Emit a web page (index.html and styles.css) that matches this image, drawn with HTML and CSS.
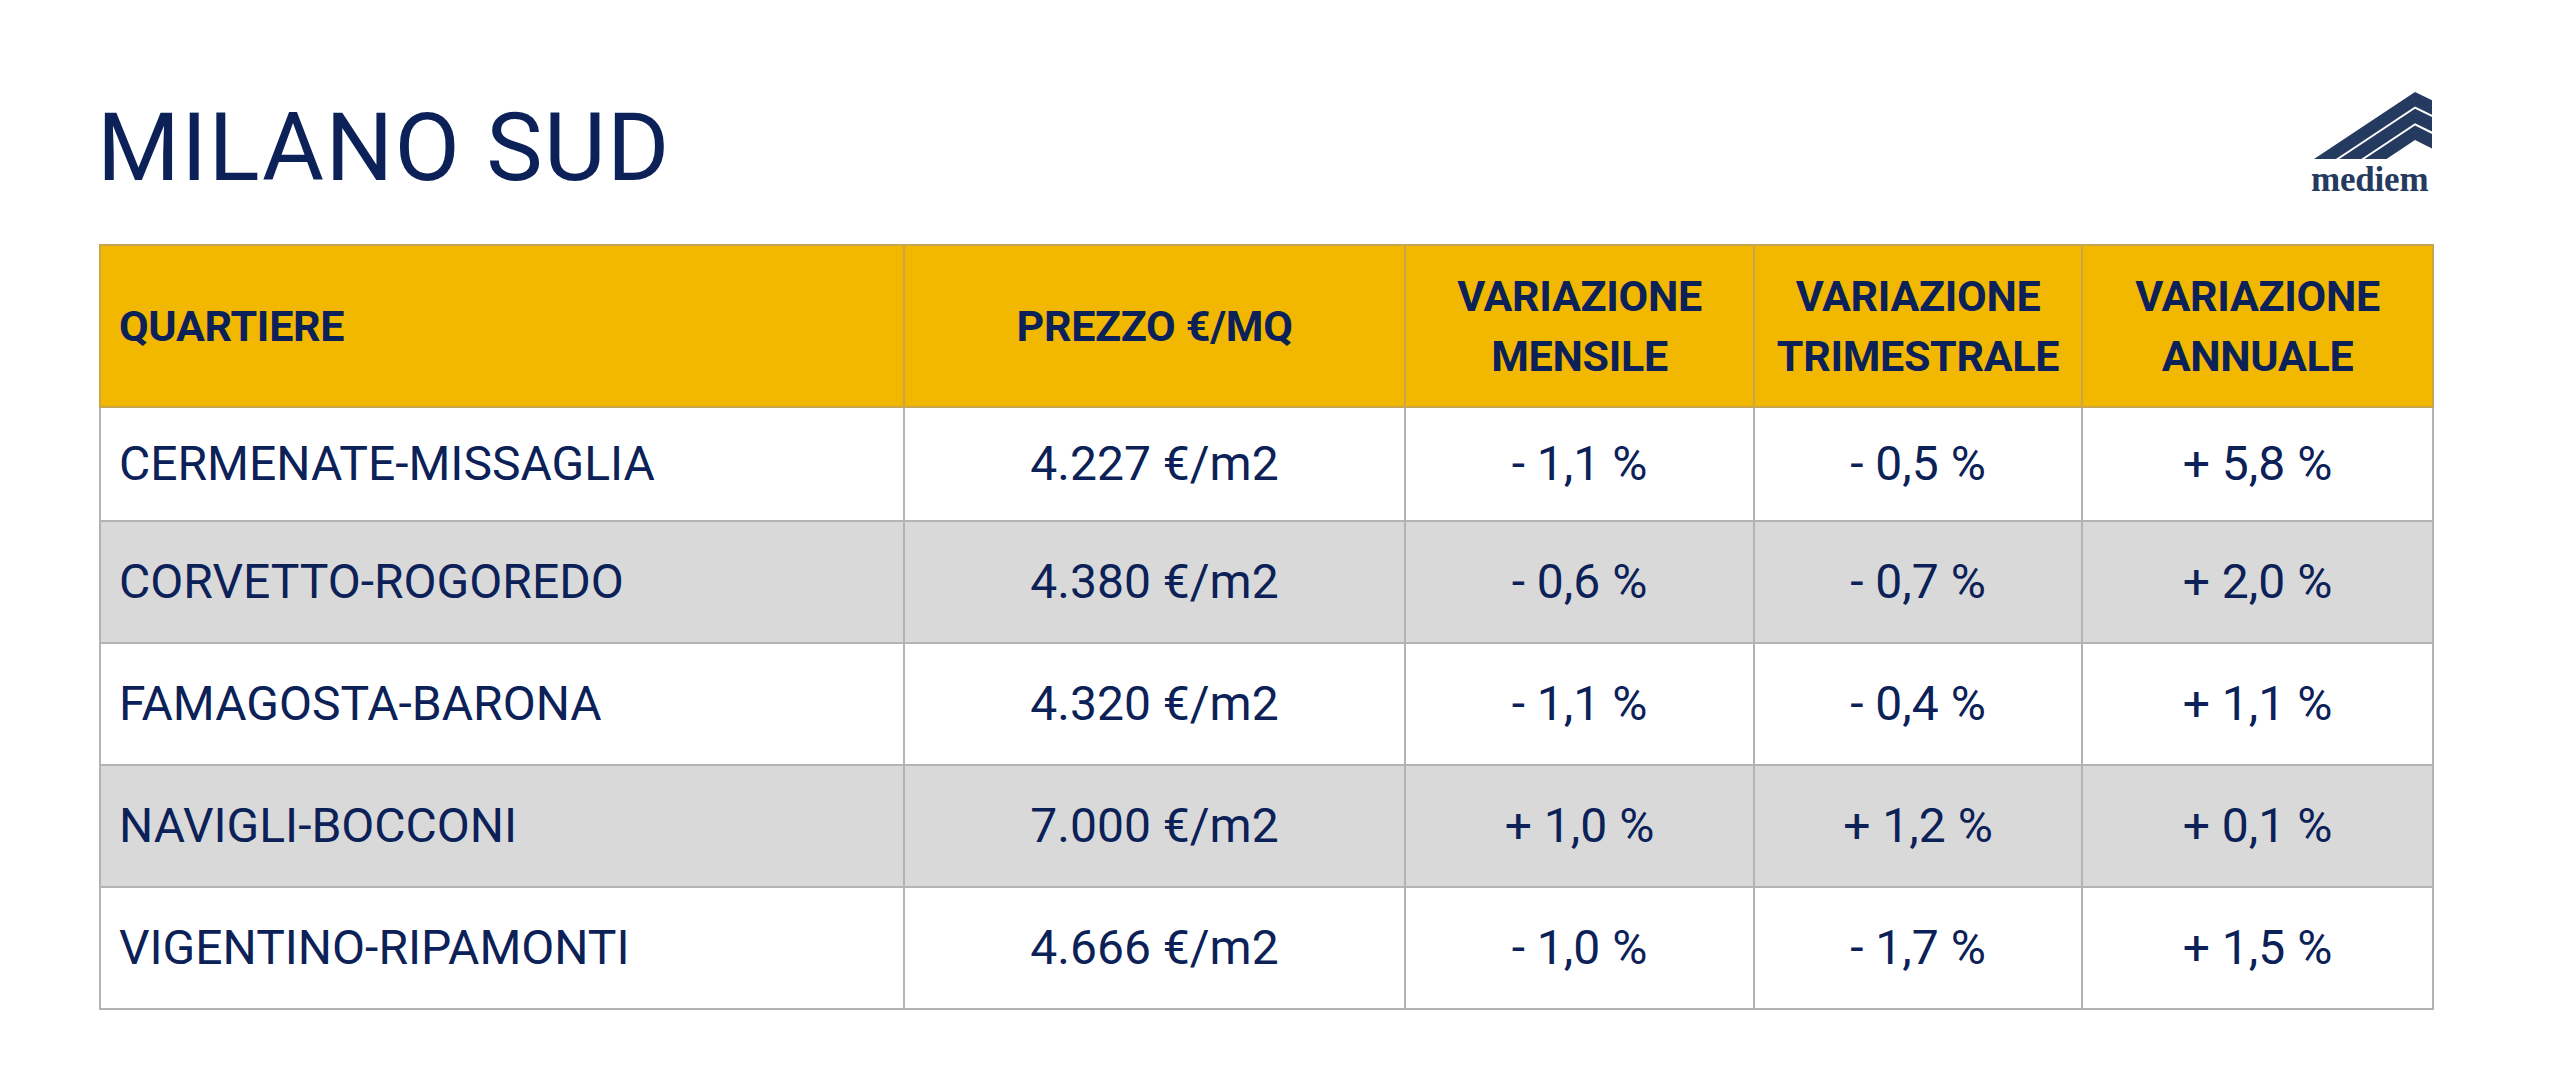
FILE: index.html
```html
<!DOCTYPE html>
<html lang="it">
<head>
<meta charset="utf-8">
<title>Milano Sud</title>
<link rel="stylesheet" href="styles.css">
</head>
<body>
<div class="page">
  <header class="top">
    <h1 class="title">MILANO SUD</h1>
    <div class="logo">
      <svg class="logo-mark" width="118" height="67" viewBox="0 0 118 67" aria-hidden="true">
        <polygon points="0,67 101,0 118,8.3 118,22.8 101,14.5 21.9,67"/>
        <polygon points="25.3,67 101,16.8 118,25.1 118,39.6 101,31.3 47.2,67"/>
        <polygon points="50.6,67 101,33.6 118,41.9 118,56.4 101,48.1 72.5,67"/>
      </svg>
      <div class="logo-text">mediem</div>
    </div>
  </header>

  <table class="prices">
    <colgroup>
      <col class="c1"><col class="c2"><col class="c3"><col class="c4"><col class="c5">
    </colgroup>
    <thead>
      <tr>
        <th class="left">QUARTIERE</th>
        <th>PREZZO €/MQ</th>
        <th>VARIAZIONE<br>MENSILE</th>
        <th>VARIAZIONE<br>TRIMESTRALE</th>
        <th>VARIAZIONE<br>ANNUALE</th>
      </tr>
    </thead>
    <tbody>
      <tr class="first">
        <td class="left">CERMENATE-MISSAGLIA</td>
        <td>4.227 €/m2</td>
        <td>- 1,1 %</td>
        <td>- 0,5 %</td>
        <td>+ 5,8 %</td>
      </tr>
      <tr class="alt">
        <td class="left">CORVETTO-ROGOREDO</td>
        <td>4.380 €/m2</td>
        <td>- 0,6 %</td>
        <td>- 0,7 %</td>
        <td>+ 2,0 %</td>
      </tr>
      <tr>
        <td class="left">FAMAGOSTA-BARONA</td>
        <td>4.320 €/m2</td>
        <td>- 1,1 %</td>
        <td>- 0,4 %</td>
        <td>+ 1,1 %</td>
      </tr>
      <tr class="alt">
        <td class="left">NAVIGLI-BOCCONI</td>
        <td>7.000 €/m2</td>
        <td>+ 1,0 %</td>
        <td>+ 1,2 %</td>
        <td>+ 0,1 %</td>
      </tr>
      <tr>
        <td class="left">VIGENTINO-RIPAMONTI</td>
        <td>4.666 €/m2</td>
        <td>- 1,0 %</td>
        <td>- 1,7 %</td>
        <td>+ 1,5 %</td>
      </tr>
    </tbody>
  </table>
</div>
</body>
</html>
```

FILE: styles.css
```css
* { box-sizing: border-box; }

html, body {
  margin: 0;
  padding: 0;
  background: #ffffff;
}

body {
  font-family: Roboto, "Liberation Sans", sans-serif;
  color: #0b2158;
}

.page {
  width: 2560px;
  height: 1077px;
  padding: 92px 128px 0 99px;
}

.top {
  display: flex;
  justify-content: space-between;
  align-items: flex-start;
  height: 152px;
}

.title {
  margin: 8px 0 0 -2px;
  font-size: 95px;
  line-height: 95px;
  font-weight: 400;
  letter-spacing: 1.4px;
  color: #0b2158;
}

.logo {
  display: flex;
  flex-direction: column;
  align-items: flex-start;
  width: 118px;
}

.logo-mark {
  display: block;
  fill: #243a5e;
}

.logo-text {
  margin-top: 6px;
  margin-left: -3px;
  font-family: "Liberation Serif", "DejaVu Serif", serif;
  font-weight: 700;
  font-size: 35px;
  line-height: 30px;
  letter-spacing: -0.2px;
  color: #243a5e;
}

.prices {
  width: 2333px;
  table-layout: fixed;
  border-collapse: collapse;
}

.c1 { width: 804px; }
.c2 { width: 501px; }
.c3 { width: 349px; }
.c4 { width: 328px; }
.c5 { width: 351px; }

.prices th {
  height: 162px;
  padding: 0 8px;
  background: #f2b800;
  border: 2px solid #c9a54e;
  font-size: 43px;
  line-height: 60px;
  font-weight: 700;
  letter-spacing: -0.3px;
  text-align: center;
  vertical-align: middle;
  color: #0b2158;
}

.prices td {
  height: 122px;
  padding: 0 8px;
  border: 2px solid #b3b3b3;
  font-size: 48px;
  line-height: 56px;
  font-weight: 400;
  text-align: center;
  vertical-align: middle;
  color: #0b2158;
}

.prices tr.first td {
  height: 114px;
}

.prices tr.alt td {
  background: #d9d9d9;
}

.prices .left {
  text-align: left;
  padding-left: 18px;
}
```
